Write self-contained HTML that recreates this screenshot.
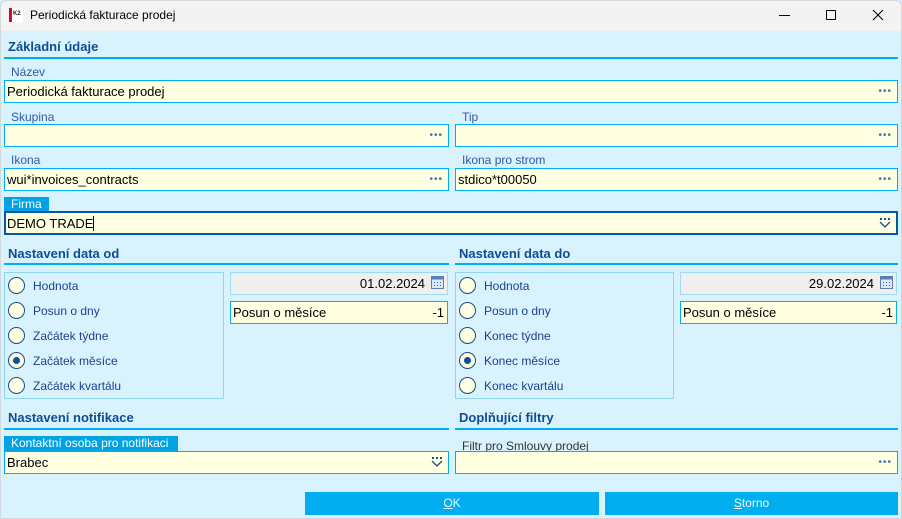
<!DOCTYPE html>
<html><head><meta charset="utf-8"><style>
*{box-sizing:border-box;margin:0;padding:0}
body{width:902px;height:519px;overflow:hidden;background:#d9f3fe;font-family:"Liberation Sans",sans-serif;font-size:12px;position:relative}
.a{position:absolute}
.title{left:0;top:0;width:902px;height:31px;background:#f3f3f3;border:1px solid #d8d8d8;border-bottom:none;border-radius:6px 6px 0 0}
.win{left:0;top:31px;width:902px;height:488px;border:1px solid #cfd8dc;border-top:none}
.h{font-weight:bold;color:#0f4c96;font-size:13px}
.line{height:2px;background:#00aeef}
.lbl{color:#2f5aa8;font-size:12px}
.inp{background:#ffffe1;border:1px solid #00aeef;color:#000;font-size:13px;line-height:22px;padding-left:2px;white-space:nowrap}
.dots{position:absolute;right:5px;top:0;color:#4a6fb0;font-size:10px;letter-spacing:1px}
.rb{border:1px solid #8fd6f3}
.r{position:absolute;width:17px;height:17px;border:1.5px solid #1d4a8a;border-radius:50%;background:#ffffe1}
.r.on::after{content:"";position:absolute;left:3.5px;top:3.5px;width:7px;height:7px;border-radius:50%;background:#0c4fa0}
.rt{position:absolute;color:#1e3f8e;font-size:12px}
.date{background:#efefef;border:1px solid #9fd9f2;text-align:right;padding-right:22px;font-size:13px;line-height:22px}
.tab{background:#00a3e3;color:#fff;font-size:12px;line-height:15px;padding-left:7px}
.btn{background:#00aeef;color:#eefaff;font-size:12px;line-height:23px;text-align:center}
</style></head><body>
<div class="a title"></div>
<div class="a" style="left:9px;top:8px;width:14px;height:14px;background:#fff;border-left:3px solid #c8102e"><div style="font-size:6px;font-weight:bold;color:#222;margin:3px 0 0 1px">K2</div></div>
<div class="a" style="left:30px;top:8px;font-size:12px;color:#000">Periodická fakturace prodej</div>
<div class="a" style="left:779px;top:15px;width:11px;height:1px;background:#000"></div>
<div class="a" style="left:826px;top:10px;width:10px;height:10px;border:1px solid #000;border-radius:1px"></div>
<svg class="a" style="left:872px;top:9px" width="12" height="12"><path d="M1 1L11 11M11 1L1 11" stroke="#000" stroke-width="1.1"/></svg>
<div class="a win"></div>

<div class="a h" style="left:8px;top:39px">Základní údaje</div>
<div class="a line" style="left:4px;top:57px;width:894px"></div>

<div class="a lbl" style="left:11px;top:65px">Název</div>
<div class="a inp" style="left:4px;top:80px;width:894px;height:23px">Periodická fakturace prodej<span class="dots">•••</span></div>

<div class="a lbl" style="left:11px;top:110px">Skupina</div>
<div class="a inp" style="left:4px;top:124px;width:445px;height:23px"><span class="dots">•••</span></div>
<div class="a lbl" style="left:462px;top:110px">Tip</div>
<div class="a inp" style="left:455px;top:124px;width:443px;height:23px"><span class="dots">•••</span></div>

<div class="a lbl" style="left:11px;top:153px">Ikona</div>
<div class="a inp" style="left:4px;top:168px;width:445px;height:23px">wui*invoices_contracts<span class="dots">•••</span></div>
<div class="a lbl" style="left:462px;top:153px">Ikona pro strom</div>
<div class="a inp" style="left:455px;top:168px;width:443px;height:23px">stdico*t00050<span class="dots">•••</span></div>

<div class="a tab" style="left:4px;top:197px;width:45px;height:14px;line-height:14px">Firma</div>
<div class="a inp" style="left:4px;top:211px;width:894px;height:24px;border:2px solid #0a55a0;line-height:21px;padding-left:1px">DEMO TRADE<span style="border-left:1px solid #000;height:15px;display:inline-block;vertical-align:-3px"></span><svg style="position:absolute;right:5px;top:4px" width="12" height="12"><path d="M1 1h2v2h-2zM5 1h2v2h-2zM9 1h2v2h-2z" fill="#1d4a8a"/><path d="M1 5L6 10L11 5" stroke="#1d4a8a" fill="none" stroke-width="1.3"/></svg></div>

<div class="a h" style="left:8px;top:246px">Nastavení data od</div>
<div class="a line" style="left:4px;top:263px;width:445px"></div>
<div class="a rb" style="left:4px;top:272px;width:220px;height:127px"></div>
<div class="r" style="left:8px;top:277px"></div><div class="rt" style="left:33px;top:279px">Hodnota</div>
<div class="r" style="left:8px;top:302px"></div><div class="rt" style="left:33px;top:304px">Posun o dny</div>
<div class="r" style="left:8px;top:327px"></div><div class="rt" style="left:33px;top:329px">Začátek týdne</div>
<div class="r on" style="left:8px;top:352px"></div><div class="rt" style="left:33px;top:354px">Začátek měsíce</div>
<div class="r" style="left:8px;top:377px"></div><div class="rt" style="left:33px;top:379px">Začátek kvartálu</div>
<div class="a date" style="left:230px;top:272px;width:218px;height:23px">01.02.2024</div>
<svg class="a" style="left:431px;top:276px" width="13" height="13"><rect x="0.5" y="0.5" width="12" height="12" fill="#dce8f6" stroke="#5b7fb8"/><rect x="0.5" y="0.5" width="12" height="3" fill="#5b7fb8"/><path d="M3 6h1v1H3zM6 6h1v1H6zM9 6h1v1H9zM3 9h1v1H3zM6 9h1v1H6zM9 9h1v1H9z" fill="#3b5fa8"/></svg>
<div class="a inp" style="left:230px;top:301px;width:218px;height:23px">Posun o měsíce<span style="position:absolute;right:3px">-1</span></div>

<div class="a h" style="left:459px;top:246px">Nastavení data do</div>
<div class="a line" style="left:455px;top:263px;width:443px"></div>
<div class="a rb" style="left:455px;top:272px;width:219px;height:127px"></div>
<div class="r" style="left:459px;top:277px"></div><div class="rt" style="left:484px;top:279px">Hodnota</div>
<div class="r" style="left:459px;top:302px"></div><div class="rt" style="left:484px;top:304px">Posun o dny</div>
<div class="r" style="left:459px;top:327px"></div><div class="rt" style="left:484px;top:329px">Konec týdne</div>
<div class="r on" style="left:459px;top:352px"></div><div class="rt" style="left:484px;top:354px">Konec měsíce</div>
<div class="r" style="left:459px;top:377px"></div><div class="rt" style="left:484px;top:379px">Konec kvartálu</div>
<div class="a date" style="left:680px;top:272px;width:217px;height:23px">29.02.2024</div>
<svg class="a" style="left:880px;top:276px" width="13" height="13"><rect x="0.5" y="0.5" width="12" height="12" fill="#dce8f6" stroke="#5b7fb8"/><rect x="0.5" y="0.5" width="12" height="3" fill="#5b7fb8"/><path d="M3 6h1v1H3zM6 6h1v1H6zM9 6h1v1H9zM3 9h1v1H3zM6 9h1v1H6zM9 9h1v1H9z" fill="#3b5fa8"/></svg>
<div class="a inp" style="left:680px;top:301px;width:217px;height:23px">Posun o měsíce<span style="position:absolute;right:3px">-1</span></div>

<div class="a h" style="left:8px;top:410px">Nastavení notifikace</div>
<div class="a line" style="left:4px;top:428px;width:445px"></div>
<div class="a tab" style="left:4px;top:436px;width:174px;height:15px">Kontaktní osoba pro notifikaci</div>
<div class="a inp" style="left:4px;top:451px;width:445px;height:23px">Brabec<svg style="position:absolute;right:5px;top:4px" width="12" height="12"><path d="M1 1h2v2h-2zM5 1h2v2h-2zM9 1h2v2h-2z" fill="#1d4a8a"/><path d="M1 5L6 10L11 5" stroke="#1d4a8a" fill="none" stroke-width="1.3"/></svg></div>

<div class="a h" style="left:459px;top:410px">Doplňující filtry</div>
<div class="a line" style="left:455px;top:428px;width:443px"></div>
<div class="a lbl" style="left:462px;top:439px;color:#333">Filtr pro Smlouvy prodej</div>
<div class="a inp" style="left:455px;top:451px;width:443px;height:23px"><span class="dots">•••</span></div>

<div class="a btn" style="left:305px;top:492px;width:294px;height:23px"><u>O</u>K</div>
<div class="a btn" style="left:605px;top:492px;width:293px;height:23px"><u>S</u>torno</div>
</body></html>
